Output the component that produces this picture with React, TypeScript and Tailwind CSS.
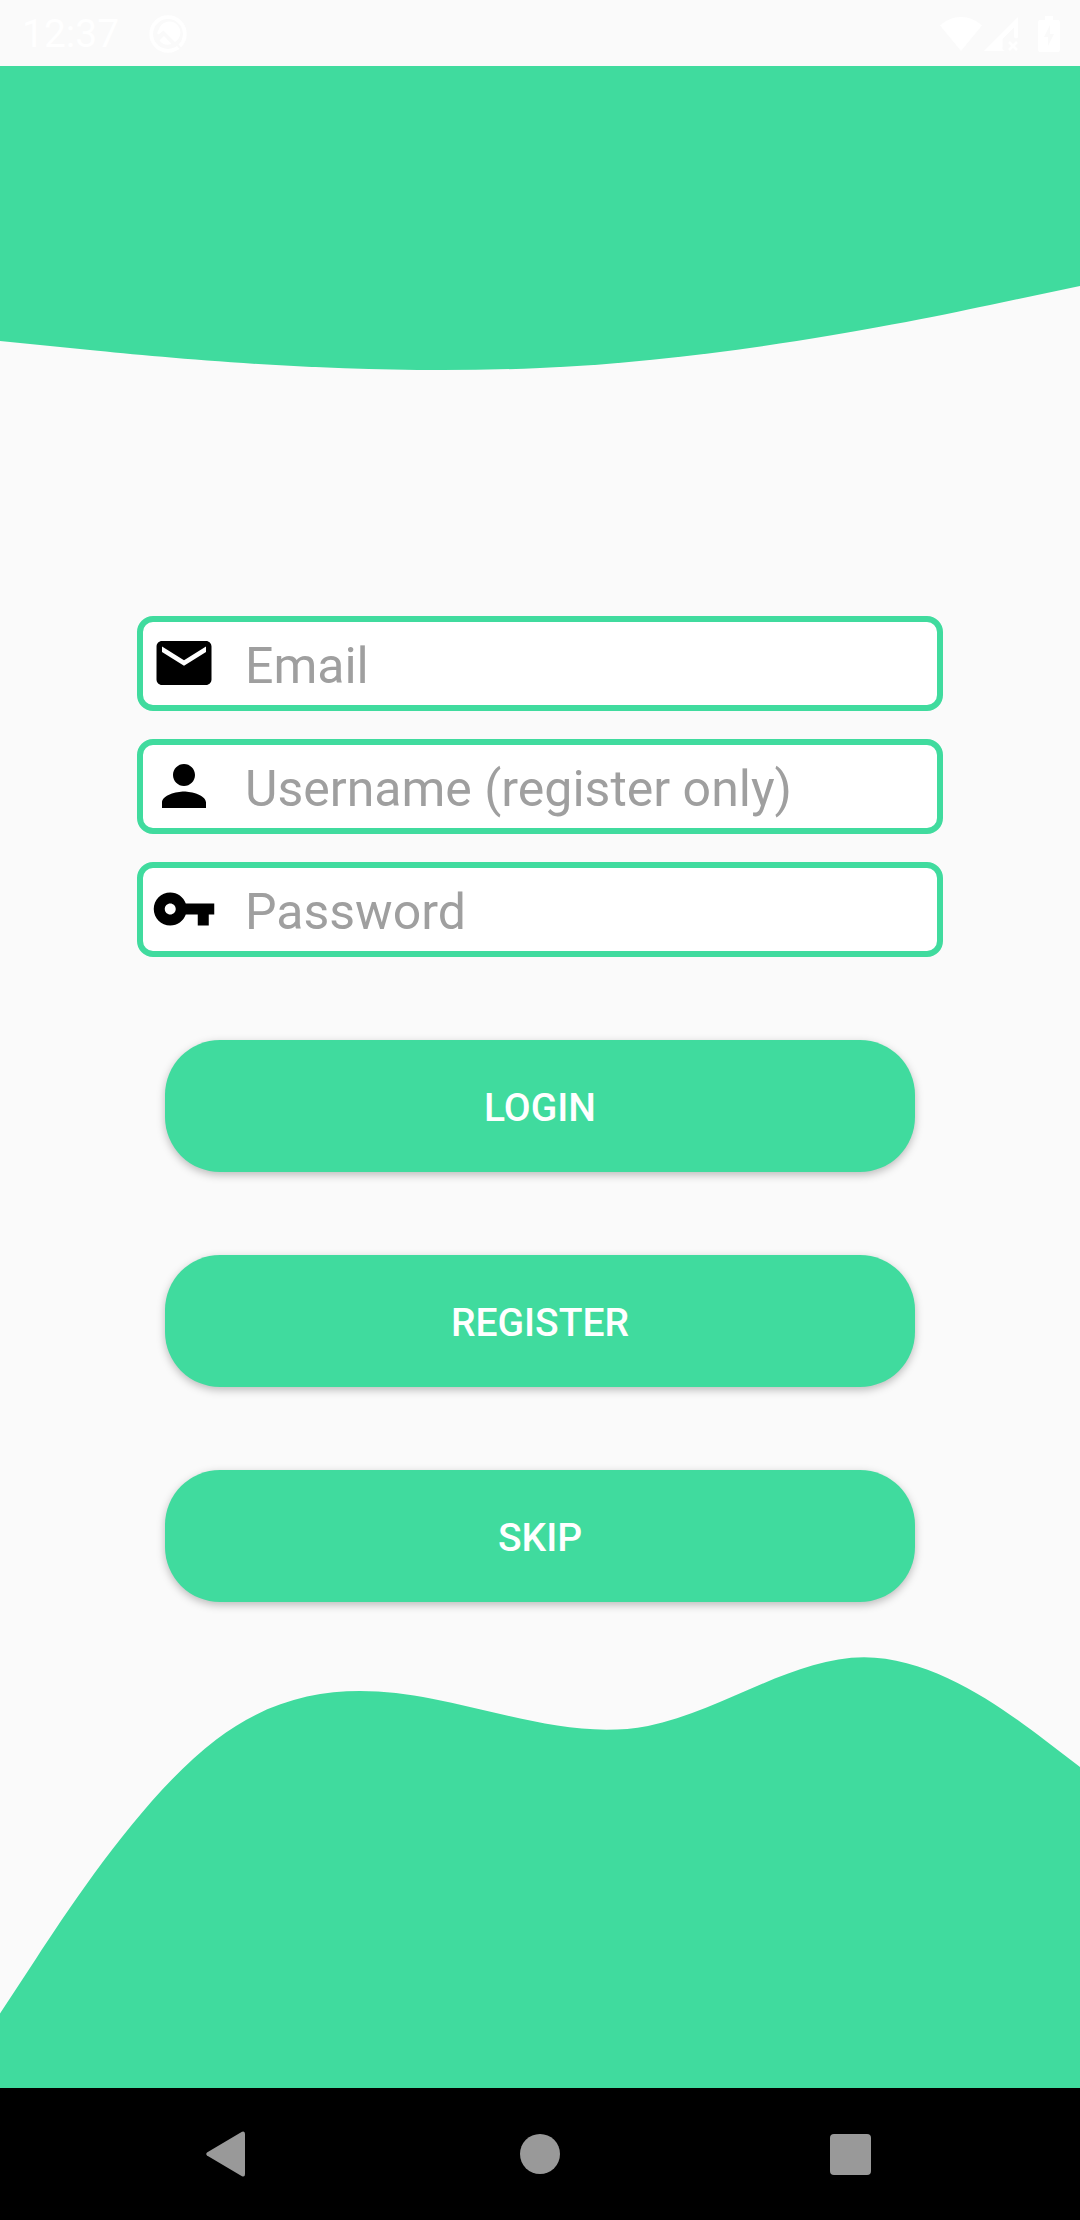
import type { ReactNode } from "react";

function QIcon() {
  return (
    <svg viewBox="0 0 38 38" className="size-[38px]" aria-hidden="true">
      <circle cx="19" cy="19" r="16.8" fill="none" stroke="#fff" strokeWidth="3.8" />
      <path d="M26 27l6 7" stroke="#fafafa" strokeWidth="2" />
      <path d="M10 14a11 11 0 1 1 16 13L14.500 15.500 9.500 19.500 8 18.300z" fill="#fff" />
      <path d="M10.500 25.500l4.500-4.500 7.500 8a11 11 0 0 1-12-3.500z" fill="#fff" />
    </svg>
  );
}

function WifiIcon() {
  return (
    <svg viewBox="0 0 42 34" className="h-[34px] w-[42px]" aria-hidden="true">
      <path d="M21 34L0 8.500C6 3 13 0 21 0s15 3 21 8.500z" fill="#fff" />
    </svg>
  );
}

function SignalOffIcon() {
  return (
    <svg viewBox="0 0 34 34" className="size-[34px]" aria-hidden="true">
      <path d="M0 34L34 0v18a2 2 0 0 1-4 2V10.500L18.500 22v8a3 3 0 0 0 2.500 4z" fill="#fff" />
      <path d="M25 25l8 8M33 25l-8 8" stroke="#fff" strokeWidth="2.600" />
    </svg>
  );
}

function BatteryIcon() {
  return (
    <svg viewBox="0 0 22 36" className="h-9 w-[22px]" aria-hidden="true">
      <path
        fillRule="evenodd"
        fill="#fff"
        d="M7 0h8v4h5a2 2 0 0 1 2 2v28a2 2 0 0 1-2 2H2a2 2 0 0 1-2-2V6a2 2 0 0 1 2-2h5zM12 9L6 21h4v9l6-12h-4z"
      />
    </svg>
  );
}

function StatusBar() {
  return (
    <header className="flex h-[66px] items-center pl-[22px] pr-5 pt-0.5 text-white">
      <time className="text-[39px] leading-none">12:37</time>
      <span className="ml-[30px]">
        <QIcon />
      </span>
      <div className="ml-auto flex items-center">
        <WifiIcon />
        <span className="ml-0.5 mr-5">
          <SignalOffIcon />
        </span>
        <BatteryIcon />
      </div>
    </header>
  );
}

type FieldProps = { id: string; label: string; type: string; icon: string };

function Field({ id, label, type, icon }: FieldProps) {
  return (
    <div className="flex h-[95px] items-center rounded-2xl border-[6px] border-[#40db9e] bg-white pl-2">
      <label htmlFor={id} aria-label={label} className="shrink-0 pb-0.5">
        <svg viewBox="0 0 24 24" className="size-[66px]" aria-hidden="true">
          <path d={icon} />
        </svg>
      </label>
      <input
        id={id}
        type={type}
        placeholder={label}
        className="ml-7 h-full min-w-0 flex-1 bg-transparent pt-1 text-[50px] text-black outline-none placeholder:text-[#9f9f9f]"
      />
    </div>
  );
}

function ActionButton({ children }: { children: ReactNode }) {
  return (
    <button
      type="button"
      className="flex h-[132px] items-center justify-center rounded-[55px] bg-[#40db9e] pt-1 text-[39px] font-medium text-white shadow-[0_3px_8px_rgba(0,0,0,0.25)]"
    >
      {children}
    </button>
  );
}

const fields: FieldProps[] = [
  {
    id: "email",
    label: "Email",
    type: "email",
    icon: "M20 4H4c-1.100 0-1.990.9-1.990 2L2 18c0 1.100.9 2 2 2h16c1.100 0 2-.9 2-2V6c0-1.100-.9-2-2-2zm0 4l-8 5-8-5V6l8 5 8-5v2z",
  },
  {
    id: "username",
    label: "Username (register only)",
    type: "text",
    icon: "M12 12c2.210 0 4-1.790 4-4s-1.790-4-4-4-4 1.790-4 4 1.790 4 4 4zm0 2c-2.670 0-8 1.340-8 4v2h16v-2c0-2.660-5.330-4-8-4z",
  },
  {
    id: "password",
    label: "Password",
    type: "password",
    icon: "M12.650 10C11.830 7.670 9.610 6 7 6c-3.310 0-6 2.690-6 6s2.690 6 6 6c2.610 0 4.830-1.670 5.650-4H17v4h4v-4h2v-4H12.650zM7 14c-1.100 0-2-.9-2-2s.9-2 2-2 2 .9 2 2-.9 2-2 2z",
  },
];

export default function App() {
  return (
    <div className="flex min-h-screen flex-col bg-[#fafafa] font-[Roboto,sans-serif]">
      <StatusBar />
      <svg
        viewBox="0 0 1080 305"
        preserveAspectRatio="none"
        className="h-[305px] w-full shrink-0"
        aria-hidden="true"
      >
        <path
          fill="#40db9e"
          d="M0 0V275L90 284C180 293 360 310 540 302C720 294 900 258 990 239L1080 220V0Z"
        />
      </svg>
      <main>
        <form className="mt-[245px] flex flex-col px-[137px]" onSubmit={(e) => e.preventDefault()}>
          <div className="flex flex-col gap-7">
            {fields.map((f) => (
              <Field key={f.id} {...f} />
            ))}
          </div>
          <div className="mx-7 mt-[83px] flex flex-col gap-[83px]">
            <ActionButton>LOGIN</ActionButton>
            <ActionButton>REGISTER</ActionButton>
            <ActionButton>SKIP</ActionButton>
          </div>
        </form>
      </main>
      <svg
        viewBox="0 0 1080 431"
        preserveAspectRatio="none"
        className="mt-auto h-[431px] w-full shrink-0"
        aria-hidden="true"
      >
        <path
          fill="#40db9e"
          d="M0 356.500L36 301.700C72 247 144 137.500 216 82.700C288 28 360 28 432 41.700C504 55.300 576 82.700 648 68.900C720 55.200 792 .3 864 .3C936 .3 1008 55.200 1044 82.600L1080 110V431H0Z"
        />
      </svg>
      <nav className="grid h-[132px] shrink-0 grid-cols-3 bg-black px-[74px]">
        <button type="button" aria-label="Back" className="flex items-center justify-center">
          <svg viewBox="0 0 46 46" className="size-[46px]" aria-hidden="true">
            <path d="M1 21.500L36 .7Q39 -.5 39 3V43Q39 46.500 36 45.300L1 24.500Q-.5 23 1 21.500Z" fill="#999" />
          </svg>
        </button>
        <button type="button" aria-label="Home" className="flex items-center justify-center">
          <span className="size-10 rounded-full bg-[#999]" />
        </button>
        <button type="button" aria-label="Recent apps" className="flex items-center justify-center">
          <span className="size-[41px] rounded bg-[#999]" />
        </button>
      </nav>
    </div>
  );
}
